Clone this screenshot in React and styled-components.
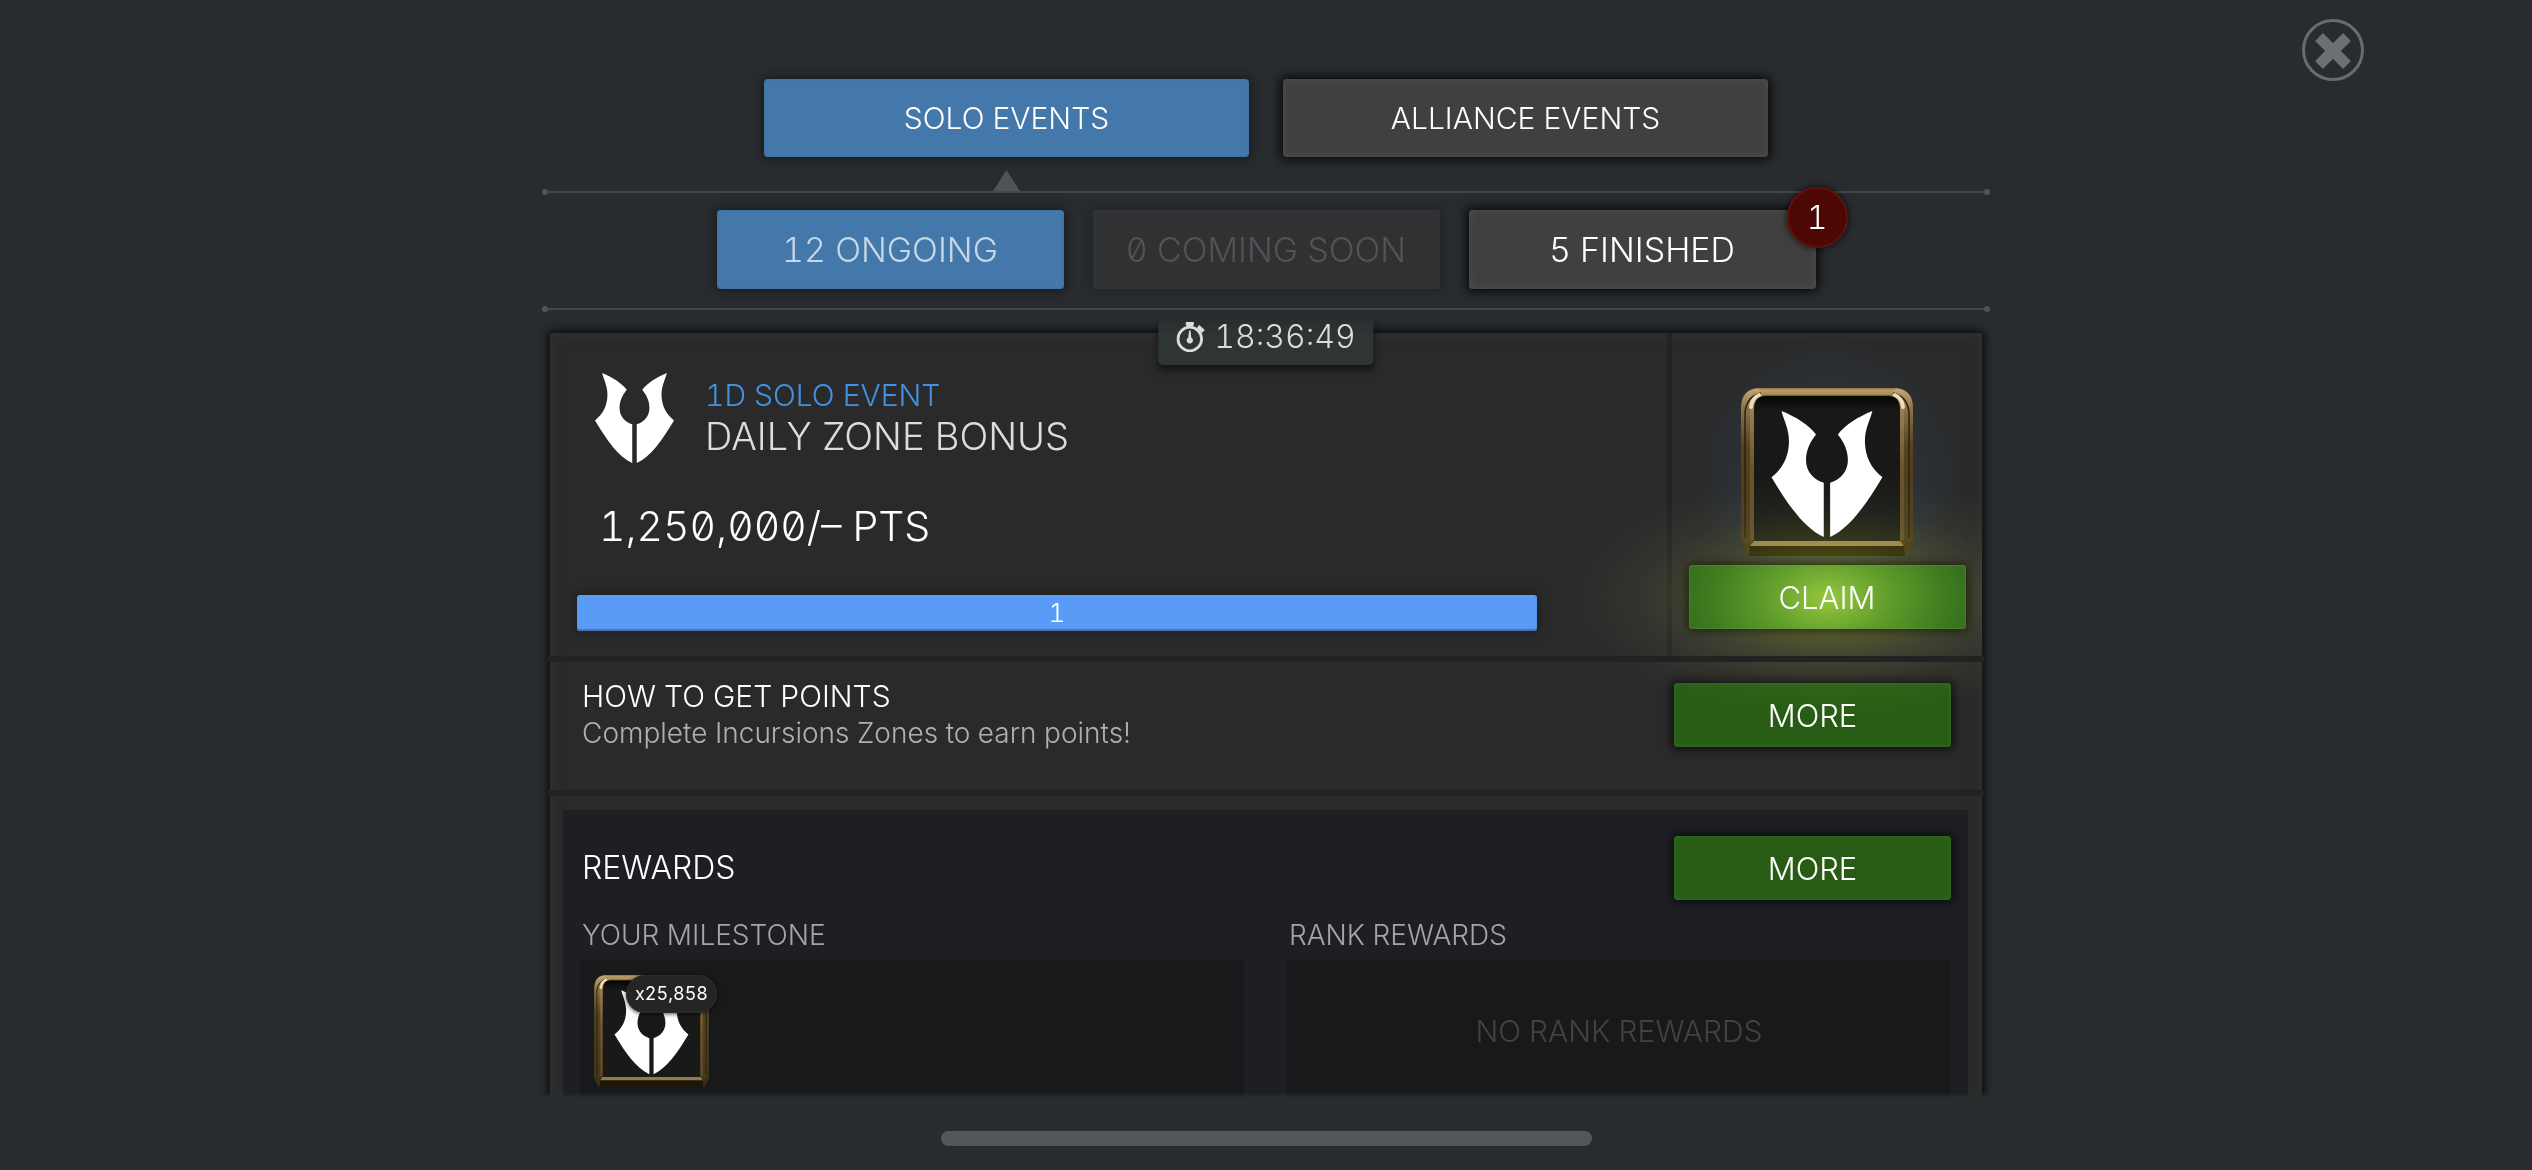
import React from 'react';
import styled, { createGlobalStyle, css } from 'styled-components';

const GlobalStyle = createGlobalStyle`
  *, *::before, *::after { box-sizing: border-box; }
  body {
    margin: 0;
    background: #282c2f;
    color: #fff;
    font-family: Inter, "Liberation Sans", sans-serif;
    font-weight: 300;
    font-feature-settings: "zero" 1, "tnum" 1;
  }
  button { font: inherit; font-feature-settings: inherit; color: inherit; border: 0; padding: 0; cursor: pointer; }
  h1, h2, h3, p { margin: 0; font-weight: inherit; }
`;

const Screen = styled.main`
  position: relative;
  display: flex;
  flex-direction: column;
  align-items: center;
  height: 100vh;
  padding-top: 79px;
  overflow: hidden;
`;

const Stage = styled.div`
  display: flex;
  flex-direction: column;
  flex: 1;
  min-height: 0;
  width: 100%;
  max-width: 1448px;
`;

const CloseButton = styled.button`
  position: absolute;
  top: 18px;
  right: 167px;
  width: 64px;
  height: 64px;
  background: none;
  svg { display: block; }
`;

const TabRow = styled.nav`
  display: flex;
  justify-content: center;
  gap: ${(p) => p.$gap}px;
`;

const tones = {
  active: css`
    background: #4478ab;
    box-shadow: inset 0 0 2px #3a6690, 0 0 10px 2px rgba(20, 18, 20, 0.7);
  `,
  normal: css`
    background: #404040;
    box-shadow: inset 0 0 8px #4e4e4e, 0 0 10px 3px rgba(5, 5, 6, 0.85);
  `,
  disabled: css`
    background: #303133;
    color: #515355;
    box-shadow: inset 0 0 5px #363738, 0 0 9px 2px rgba(32, 32, 35, 0.8);
  `,
};

const Tab = styled.button`
  position: relative;
  flex: 0 1 485px;
  height: 78px;
  border-radius: 4px;
  font-size: 30px;
  ${(p) => tones[p.$tone]}
`;

const TabPointer = styled.span`
  position: absolute;
  top: calc(100% + 13px);
  left: calc(50% - 14px);
  width: 28px;
  height: 22px;
  background: #505457;
  clip-path: polygon(50% 0, 100% 100%, 0 100%);
`;

const FilterTab = styled(Tab)`
  flex-basis: 347px;
  height: 79px;
  font-size: 34px;
  ${(p) => p.$tone === 'active' && 'color: #c6d7e6;'}
`;

const CountBadge = styled.span`
  position: absolute;
  top: -23px;
  right: -32px;
  width: 61px;
  height: 61px;
  border: 2px solid #66100c;
  border-radius: 50%;
  background: #4c0805;
  box-shadow: 0 0 6px 1px rgba(0, 0, 0, 0.6);
  font-size: 32px;
  line-height: 57px;
`;

const Rule = styled.hr`
  position: relative;
  width: calc(100% - 4px);
  height: 2px;
  margin: ${(p) => p.$space};
  border: 0;
  background: #44484b;
  overflow: visible;
  &::before, &::after {
    content: "";
    position: absolute;
    top: -2px;
    width: 6px;
    height: 6px;
    border-radius: 50%;
    background: #505457;
  }
  &::before { left: -2px; }
  &::after { right: -2px; }
`;

const Scroller = styled.section`
  position: relative;
  flex: 1;
  min-height: 0;
  margin: 0 -20px;
  padding: 23px 28px 0;
  overflow: hidden;
  &::after {
    content: "";
    position: absolute;
    inset: auto 0 0;
    height: 6px;
    background: linear-gradient(rgba(40, 44, 47, 0), #282c2f);
  }
`;

const Card = styled.article`
  position: relative;
  background: #2a2a2a;
  border-radius: 4px;
  box-shadow: inset 0 0 14px #32322e, 0 0 8px 3px rgba(8, 9, 10, 0.85);
`;

const Countdown = styled.div`
  position: absolute;
  top: -15px;
  left: 50%;
  transform: translateX(-50%);
  display: flex;
  align-items: center;
  gap: 9px;
  height: 47px;
  padding: 0 18px 9px;
  border-radius: 0 0 5px 5px;
  background: linear-gradient(#292d2f, #2f3434 40%);
  box-shadow: 0 5px 7px rgba(0, 0, 0, 0.55);
  color: #dcdcdc;
  font-size: 32px;
  line-height: 38px;
  white-space: nowrap;
`;

const Summary = styled.div`
  display: grid;
  grid-template-columns: minmax(0, 1fr) 310px;
  height: 323px;
`;

const SummaryMain = styled.div`
  padding: 40px 135px 0 27px;
`;

const TitleRow = styled.header`
  display: flex;
  gap: 31px;
  padding-left: 18px;
`;

const EventKind = styled.p`
  color: #4292e2;
  font-size: 30px;
  line-height: 44px;
`;

const EventTitle = styled.h1`
  color: #dcdcdc;
  font-size: 38px;
  line-height: 38px;
`;

const Points = styled.p`
  margin-top: 39px;
  padding-left: 22px;
  font-size: 41px;
  line-height: 48px;
`;

const ProgressBar = styled.div`
  height: 36px;
  margin-top: 45px;
  border-radius: 3px;
  background: #5a9bf6;
  box-shadow: inset 0 -2px 1px #4674b4, 0 0 8px 2px rgba(30, 30, 32, 0.8);
  font-size: 26px;
  line-height: 36px;
  text-align: center;
`;

const ClaimCell = styled.div`
  position: relative;
  display: flex;
  flex-direction: column;
  align-items: center;
  gap: 9px;
  padding-top: 55px;
  background: radial-gradient(circle 136px at 157px 142px, #2c333b 50%, rgba(43, 50, 59, 0));
  box-shadow: -5px 0 0 #232323;
  &::after {
    content: "";
    position: absolute;
    top: 144px;
    left: -103px;
    right: 0;
    height: 240px;
    background: radial-gradient(
      260px 120px at 260px 120px,
      #505a04,
      #3a4204 25%,
      #1c1f08 50%,
      #0b0c05 72%,
      #000
    );
    mix-blend-mode: screen;
    pointer-events: none;
  }
`;

const ActionButton = styled.button`
  flex: none;
  width: 277px;
  height: 64px;
  border-radius: 4px;
  background: #285c14;
  box-shadow: inset 0 0 5px #34702a, 0 0 9px 3px rgba(10, 10, 11, 0.75);
  font-size: 31px;
`;

const ClaimButton = styled(ActionButton)`
  position: relative;
  z-index: 1;
  background: radial-gradient(ellipse 150px 95px at 50% 52%, #96c83e, #5f9c2b 42%, #3f7d20 78%, #336d1c);
  box-shadow: inset 0 0 2px #6f9c55, 0 0 8px 2px rgba(24, 26, 8, 0.75);
`;

const Divider = styled.div`
  position: relative;
  height: 6px;
  margin: 0 -2px;
  background: #222;
`;

const HowTo = styled.section`
  display: flex;
  align-items: center;
  justify-content: space-between;
  height: 128px;
  padding: 16px 31px 38px 32px;
`;

const SectionTitle = styled.h2`
  font-size: ${(p) => p.$size || 30}px;
  line-height: 36px;
`;

const Hint = styled.p`
  color: #b0b0b0;
  font-size: 28px;
  line-height: 38px;
`;

const Rewards = styled.section`
  margin: 14px 14px 0 13px;
  padding: 26px 17px 0;
  background: #1e1f23;
`;

const RewardsHead = styled.header`
  display: flex;
  align-items: center;
  justify-content: space-between;
  padding-left: 2px;
`;

const RewardColumns = styled.div`
  display: grid;
  grid-template-columns: 1fr 1fr;
  gap: 43px;
  margin-top: 16px;
`;

const ColumnTitle = styled.h3`
  padding-left: 2px;
  color: #a5a5a6;
  font-size: 28px;
  line-height: 38px;
`;

const RewardBox = styled.div`
  display: flex;
  align-items: ${(p) => (p.$empty ? 'center' : 'flex-start')};
  justify-content: ${(p) => (p.$empty ? 'center' : 'flex-start')};
  height: 142px;
  margin-top: 6px;
  padding: 15px 14px;
  background: #18191a;
  color: #414243;
  font-size: 30px;
`;

const RewardItem = styled.div`
  position: relative;
  height: 112px;
`;

const Amount = styled.span`
  position: absolute;
  top: 0;
  left: 32px;
  padding: 0 9px;
  border-radius: 19px;
  background: #252527;
  box-shadow: inset 0 0 2px #3c3c3c, 0 1px 4px rgba(0, 0, 0, 0.7);
  color: #fff;
  font-size: 18px;
  font-weight: 400;
  line-height: 38px;
`;

const BottomBar = styled.footer`
  flex: none;
  width: 100%;
  height: 72px;
  padding-top: 33px;
  &::before {
    content: "";
    display: block;
    width: 651px;
    max-width: 60%;
    height: 15px;
    margin: 0 auto;
    border-radius: 8px;
    background: #555659;
  }
`;

const HALF =
  'M30 0C36 26 54 56 52 96C50 138 34 170 0 198C48 278 98 350 156 376V214C122 203 103 178 103 146C103 118 114 94 133 70C112 42 74 18 30 0Z';

function EmblemShape() {
  return (
    <g fill="#fff">
      <path d={HALF} />
      <path d={HALF} transform="translate(331 0) scale(-1 1)" />
    </g>
  );
}

function Emblem({ width, height }) {
  return (
    <svg width={width} height={height} viewBox="0 0 331 376" preserveAspectRatio="none" aria-hidden="true">
      <EmblemShape />
    </svg>
  );
}

const FrameSvg = styled.svg`
  display: block;
`;

function FramedEmblem({ id, width, height }) {
  return (
    <FrameSvg width={width} height={height} viewBox="0 0 172 168" aria-hidden="true">
      <defs>
        <linearGradient id={`${id}-side`} x1="0" y1="0" x2="0" y2="1">
          <stop offset="0" stopColor="#c8a971" />
          <stop offset="0.12" stopColor="#8c7247" />
          <stop offset="0.35" stopColor="#56431f" />
          <stop offset="1" stopColor="#43351a" />
        </linearGradient>
        <linearGradient id={`${id}-rim`} x1="0" y1="0" x2="0" y2="1">
          <stop offset="0" stopColor="#a3885a" />
          <stop offset="0.5" stopColor="#6b5530" />
          <stop offset="1" stopColor="#5c4826" />
        </linearGradient>
        <linearGradient id={`${id}-top`} x1="0" y1="0" x2="0" y2="1">
          <stop offset="0" stopColor="#8f7549" />
          <stop offset="0.3" stopColor="#b99b66" />
          <stop offset="0.8" stopColor="#a98b55" />
          <stop offset="1" stopColor="#5b4a28" />
        </linearGradient>
        <linearGradient id={`${id}-in`} x1="0" y1="0" x2="0" y2="1">
          <stop offset="0" stopColor="#060600" />
          <stop offset="0.1" stopColor="#181818" />
          <stop offset="1" stopColor="#191917" />
        </linearGradient>
      </defs>
      <path d="M0 20Q0 0 20 0H152Q172 0 172 20V156L165 168H7L0 156Z" fill={`url(#${id}-side)`} />
      <path d="M4 150V24Q6 8 20 5M168 150V24Q166 8 152 5" fill="none" stroke="#2b2111" strokeWidth="1.500" />
      <path d="M11 152V24Q11 8 22 8H150Q161 8 161 24V152" fill="none" stroke={`url(#${id}-rim)`} strokeWidth="4" />
      <path d="M17 0H155L150 8H22Z" fill={`url(#${id}-top)`} />
      <path d="M10 19Q11 10 18 7" fill="none" stroke="#eadcbd" strokeWidth="4" strokeLinecap="round" />
      <path d="M162 19Q161 10 154 7" fill="none" stroke="#eadcbd" strokeWidth="4" strokeLinecap="round" />
      <path d="M0 156L10 157H162L172 156L165 168H7Z" fill="#1d170a" />
      <path d="M0 152L9 157L8 168H7L0 156ZM172 152L163 157L164 168H165L172 156Z" fill="#3c2f14" />
      <path d="M13 153H159L163 158H9Z" fill="#96794a" />
      <path d="M13 22Q13 8 24 8H148Q159 8 159 22V153H13Z" fill={`url(#${id}-in)`} />
      <g transform="translate(30.5 23) scale(0.335)">
        <EmblemShape />
      </g>
    </FrameSvg>
  );
}

function Stopwatch() {
  return (
    <svg width="29" height="30" viewBox="0 0 29 30" aria-hidden="true">
      <g fill="#dcdcdc">
        <circle cx="13.500" cy="17" r="11.800" fill="none" stroke="#dcdcdc" strokeWidth="2.800" />
        <path d="M9.500 0H17.500V3.500H16.500V6H10.500V3.500H9.500Z" />
        <path d="M23 3L28.500 8L25.500 11L20.500 6Z" />
        <path d="M12.800 8.500H14.200L15 15.500A3.200 3.200 0 1 1 12 15.500Z" />
      </g>
    </svg>
  );
}

export default function App() {
  return (
    <>
      <GlobalStyle />
      <Screen>
        <CloseButton aria-label="Close">
          <svg width="64" height="64" viewBox="0 0 64 64">
            <circle cx="32" cy="32" r="29.500" fill="none" stroke="#696b6d" strokeWidth="3" />
            <path d="M18 18L46 46M46 18L18 46" transform="translate(0 1)" stroke="#6d6f71" strokeWidth="11" />
          </svg>
        </CloseButton>

        <Stage>
          <TabRow $gap={34} aria-label="Event type">
            <Tab $tone="active">
              SOLO EVENTS
              <TabPointer />
            </Tab>
            <Tab $tone="normal">ALLIANCE EVENTS</Tab>
          </TabRow>
          <Rule $space="34px auto 17px" />
          <TabRow $gap={29} aria-label="Event status">
            <FilterTab $tone="active">12 ONGOING</FilterTab>
            <FilterTab $tone="disabled" disabled>0 COMING SOON</FilterTab>
            <FilterTab $tone="normal">
              5 FINISHED
              <CountBadge>1</CountBadge>
            </FilterTab>
          </TabRow>
          <Rule $space="19px auto 0" />

          <Scroller>
            <Card>
              <Summary>
                <SummaryMain>
                  <TitleRow>
                    <Emblem width={79} height={90} />
                    <div>
                      <EventKind>1D SOLO EVENT</EventKind>
                      <EventTitle>DAILY ZONE BONUS</EventTitle>
                    </div>
                  </TitleRow>
                  <Points>1,250,000/– PTS</Points>
                  <ProgressBar role="progressbar" aria-valuenow={1} aria-valuemin={0} aria-valuemax={1}>1</ProgressBar>
                </SummaryMain>
                <ClaimCell>
                  <FramedEmblem id="prize" width={172} height={168} />
                  <ClaimButton>CLAIM</ClaimButton>
                </ClaimCell>
              </Summary>
              <Divider />
              <HowTo>
                <div>
                  <SectionTitle>HOW TO GET POINTS</SectionTitle>
                  <Hint>Complete Incursions Zones to earn points!</Hint>
                </div>
                <ActionButton>MORE</ActionButton>
              </HowTo>
              <Divider />
              <Rewards>
                <RewardsHead>
                  <SectionTitle $size={32}>REWARDS</SectionTitle>
                  <ActionButton>MORE</ActionButton>
                </RewardsHead>
                <RewardColumns>
                  <div>
                    <ColumnTitle>YOUR MILESTONE</ColumnTitle>
                    <RewardBox>
                      <RewardItem>
                        <FramedEmblem id="milestone" width={115} height={112} />
                        <Amount>x25,858</Amount>
                      </RewardItem>
                    </RewardBox>
                  </div>
                  <div>
                    <ColumnTitle>RANK REWARDS</ColumnTitle>
                    <RewardBox $empty>NO RANK REWARDS</RewardBox>
                  </div>
                </RewardColumns>
              </Rewards>
              <Countdown>
                <Stopwatch />
                <time>18:36:49</time>
              </Countdown>
            </Card>
          </Scroller>
        </Stage>
        <BottomBar />
      </Screen>
    </>
  );
}
